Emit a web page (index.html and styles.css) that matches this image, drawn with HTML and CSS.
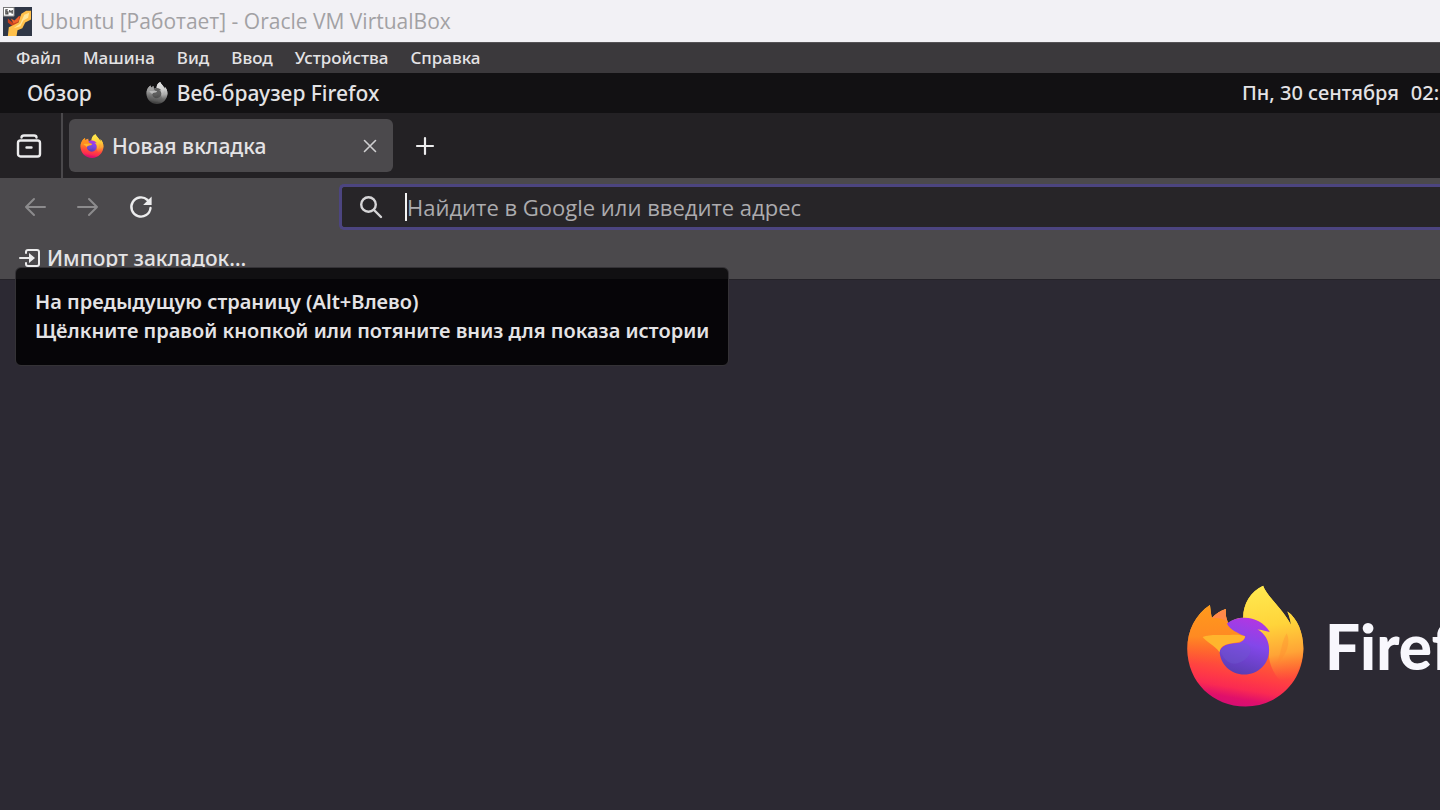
FILE: index.html
```html
<!DOCTYPE html>
<html lang="ru">
<head>
<meta charset="utf-8">
<title>Ubuntu [Работает] - Oracle VM VirtualBox</title>
<link rel="stylesheet" href="styles.css">
</head>
<body>
<svg class="defs" aria-hidden="true">
  <defs>
    <linearGradient id="body" x1="0.65" y1="0.1" x2="0.5" y2="1">
      <stop offset="0" stop-color="#ffdc3e"/><stop offset=".28" stop-color="#ffad2d"/><stop offset=".5" stop-color="#ff6a2b"/><stop offset=".75" stop-color="#ff3b45"/><stop offset=".85" stop-color="#fa2a52"/><stop offset=".94" stop-color="#e0106a"/><stop offset="1" stop-color="#d80d72"/>
    </linearGradient>
    <linearGradient id="flame" x1="0.4" y1="0" x2="0.5" y2="1">
      <stop offset="0" stop-color="#ffe94f"/><stop offset=".4" stop-color="#ffd43a"/><stop offset=".7" stop-color="#ffa436"/><stop offset=".97" stop-color="#ff7436" stop-opacity="0"/>
    </linearGradient>
    <linearGradient id="globe" x1="0.65" y1="0" x2="0.4" y2="1">
      <stop offset="0" stop-color="#b336e2"/><stop offset=".45" stop-color="#8347ea"/><stop offset="1" stop-color="#5a3db2"/>
    </linearGradient>
    <linearGradient id="head" x1="0" y1="0" x2="0" y2="1">
      <stop offset="0" stop-color="#ff9a1c"/><stop offset=".4" stop-color="#ff8a22"/><stop offset=".75" stop-color="#ff5a30" stop-opacity="0"/>
    </linearGradient>
    <symbol id="firefox" viewBox="50 45 352 366">
      <path fill="url(#body)" d="M119 105C121 119 122 133 125 144C137 131 151 122 167 117C165 135 168 148 174 160C187 149 202 143 219 143C219 101 241 65 279 47C290 78 334 112 363 164C361 148 357 136 352 124C382 144 400 188 400 236C400 333 323 410 226 410C128 410 51 336 51 236C51 182 76 133 119 105Z"/>
      <path fill="url(#flame)" d="M219 143C219 101 241 65 279 47C290 78 334 112 363 164C361 148 357 136 352 124C382 144 400 188 400 236C400 276 380 320 350 346C330 340 290 290 297 240C297 208 280 190 262 178C278 178 289 182 299 185C280 158 252 143 219 143Z"/>
      <path fill="url(#head)" d="M119 105C121 119 122 133 125 144C137 131 151 122 167 117C165 138 170 151 177 163C188 181 208 188 224 198C222 218 195 216 168 222C152 229 147 240 150 253C145 279 160 304 186 312C125 370 51 336 51 236C51 182 76 133 119 105Z"/>
      <path fill="#ff884a" d="M125 144C137 131 151 122 167 117C165 130 167 143 172 154C157 145 141 142 125 144Z"/>
      <path fill="url(#globe)" d="M170 160C187 148 204 143 223 143C255 143 283 159 299 186C286 182 274 179 262 178C284 190 297 210 297 240C297 282 264 314 222 314C182 314 149 282 148 243C158 219 190 220 208 218C220 213 223 208 225 199C203 188 181 181 170 160Z"/>
      <path fill="#6f5bd0" opacity=".4" d="M150 243C167 219 202 226 224 219C254 230 242 263 211 277C188 288 163 277 150 243Z"/>
      <path fill="#ffb52d" d="M97 201C119 191 154 196 179 195C199 193 214 195 225 199C221 219 197 217 170 223C155 228 149 236 148 247C134 226 108 216 97 201Z"/>
      <path fill="#ff8a32" opacity=".35" d="M350 190C363 217 351 256 318 285C336 248 331 222 350 190Z"/>
    </symbol>
  </defs>
</svg>

<header class="titlebar">
  <svg class="vm-icon" viewBox="0 0 30 30" aria-hidden="true">
    <path fill="#303746" d="M0 0h30v30H0z"/>
    <path fill="#c8401f" d="M5 12l5 4 7-7 2 1-4 7-5 3-5-4z"/>
    <path fill="#f0642c" d="M8 12l4 2 5-5-1 6-5 2z"/>
    <path fill="#ffc04b" d="M29 4v9l-6 3-3 6-5 2-1 6H5l1-9 6-3 4-2 3-9 5-3z"/>
    <path fill="#ffe69a" d="M22 8l5-2-1 5-5 3-3 6-7 2 7-5z"/>
    <path fill="#fff" stroke="#777" d="M.5.5h11v9H.5z"/>
    <path fill="none" stroke="#444" stroke-width="1.3" d="M5 3H3v4h2V5H3M7 3v2h3M9.500 3v4"/>
  </svg>
  <h1 class="window-title">Ubuntu [Работает] - Oracle VM VirtualBox</h1>
</header>

<nav class="menubar" aria-label="Меню">
  <button class="menu">Файл</button>
  <button class="menu">Машина</button>
  <button class="menu">Вид</button>
  <button class="menu">Ввод</button>
  <button class="menu">Устройства</button>
  <button class="menu">Справка</button>
</nav>

<div class="panel">
  <button class="overview">Обзор</button>
  <button class="app-menu"><svg class="app-icon" aria-hidden="true"><use href="#firefox"/></svg>Веб-браузер Firefox</button>
  <time class="clock"><span>Пн, 30 сентября</span><span>02:</span></time>
</div>

<div class="tabstrip">
  <button class="recent" aria-label="Обзор вкладок">
    <svg class="icon" viewBox="0 0 26 26" fill="none" stroke="#ececed" stroke-width="2.400" stroke-linecap="round" aria-hidden="true"><rect x="2" y="7.500" width="22" height="16" rx="2.500"/><path d="M5.500 4.500Q5.500 2.500 8 2.500H18Q20.500 2.500 20.500 4.500M10.500 14.500h5"/></svg>
  </button>
  <div class="tab">
    <svg class="tab-icon" aria-hidden="true"><use href="#firefox"/></svg>
    <span class="tab-title">Новая вкладка</span>
    <button class="close" aria-label="Закрыть вкладку"><svg viewBox="0 0 14 14" width="14" height="14" fill="none" stroke="#d0cfd1" stroke-width="1.600" stroke-linecap="round"><path d="M1.500 1.500l11 11M12.500 1.500l-11 11"/></svg></button>
  </div>
  <button class="new-tab" aria-label="Новая вкладка"><svg viewBox="0 0 20 20" width="20" height="20" fill="none" stroke="#ececed" stroke-width="2.200" stroke-linecap="round"><path d="M10 2v16M2 10h16"/></svg></button>
</div>

<div class="toolbar">
  <button class="tool" aria-label="Назад"><svg class="icon" viewBox="0 0 26 26" fill="none" stroke="#8c8b8d" stroke-width="2" stroke-linecap="round" stroke-linejoin="round"><path d="M23 13H4M12 5l-8 8 8 8"/></svg></button>
  <button class="tool" aria-label="Вперёд"><svg class="icon" viewBox="0 0 26 26" fill="none" stroke="#8c8b8d" stroke-width="2" stroke-linecap="round" stroke-linejoin="round"><path d="M3 13h19M14 5l8 8-8 8"/></svg></button>
  <button class="tool" aria-label="Обновить"><svg class="icon" viewBox="0 0 26 26" fill="none" stroke="#ececed" stroke-width="2.400" stroke-linecap="round"><path d="M22.500 14A9.600 9.600 0 1 1 19.500 6"/><path fill="#ececed" stroke="none" d="M23.600 2.500V11h-8.500z"/></svg></button>
  <label class="address">
    <svg class="icon" viewBox="0 0 26 26" fill="none" stroke="#d6d5d7" stroke-width="2.400" stroke-linecap="round" aria-hidden="true"><circle cx="10.500" cy="10.500" r="7.300"/><path d="M16 16l7 7"/></svg>
    <input class="query" type="text" aria-label="Адрес" placeholder="Найдите в Google или введите адрес">
  </label>
</div>

<div class="bookmarks">
  <a class="import" href="#"><svg class="import-icon" viewBox="0 0 22 20" fill="none" stroke="#ececed" stroke-width="2" stroke-linecap="round" aria-hidden="true"><path d="M7 5V4Q7 2 9 2h9q2 0 2 2v12q0 2-2 2H9q-2 0-2-2v-1M1 10h11"/><path fill="#ececed" stroke="none" d="M10 5l6 5-6 5z"/></svg>Импорт закладок…</a>
  <div class="tooltip" role="tooltip">На предыдущую страницу (Alt+Влево)<br>Щёлкните правой кнопкой или потяните вниз для показа истории</div>
</div>

<main class="page">
  <div class="brand">
    <svg class="logo" aria-hidden="true"><use href="#firefox"/></svg>
    <span class="wordmark">Firef</span>
  </div>
</main>
</body>
</html>
```
FILE: styles.css
```css
* { box-sizing: border-box; }

body {
  margin: 0;
  min-height: 100vh;
  display: flex;
  flex-direction: column;
  overflow: hidden;
  background: #2c2933;
  color: #e4e3e5;
  font: 500 21px/28px "Noto Sans", "Open Sans", sans-serif;
  white-space: nowrap;
}

button {
  padding: 0;
  border: 0;
  background: none;
  color: inherit;
  font: inherit;
}

svg { display: block; flex: none; }
.defs { position: absolute; width: 0; height: 0; }
.icon { width: 26px; height: 26px; }

.titlebar {
  display: flex;
  align-items: center;
  gap: 8px;
  height: 42px;
  padding: 0 3px;
  background: #f2f1f5;
}
.vm-icon { width: 29px; height: 29px; }
.window-title {
  margin: 0;
  color: #a2a1a4;
  font: 400 21px/28px "Open Sans", sans-serif;
}

.menubar {
  display: flex;
  align-items: center;
  gap: 22px;
  height: 31px;
  padding: 0 16px;
  background: #3b393c;
  border-top: 1px solid #555356;
  font-size: 17px;
}

.panel {
  display: flex;
  align-items: center;
  height: 40px;
  padding-left: 27px;
  background: #121113;
}
.app-menu {
  display: flex;
  align-items: center;
  gap: 9px;
  margin-left: 54px;
}
.app-icon { width: 22px; height: 22px; filter: grayscale(1); }
.clock {
  display: flex;
  gap: 12px;
  width: 198px;
  margin-left: auto;
  font-size: 20px;
}

.tabstrip {
  display: flex;
  align-items: center;
  height: 65px;
  background: #232124;
}
.recent {
  display: flex;
  align-items: center;
  align-self: stretch;
  width: 63px;
  padding-left: 16px;
  border-right: 2px solid #4a484b;
}
.tab {
  display: flex;
  align-items: center;
  width: 324px;
  height: 53px;
  margin-left: 6px;
  padding: 0 16px 0 11px;
  border-radius: 6px;
  background: #4b494c;
}
.tab-icon { width: 24px; height: 24px; margin-right: 8px; }
.close { margin-left: auto; }
.new-tab { margin-left: 22px; }

.toolbar {
  display: flex;
  align-items: center;
  gap: 27px;
  height: 58px;
  padding-left: 22px;
  background: #4b494c;
}
.address {
  display: flex;
  flex: 1;
  align-items: center;
  gap: 21px;
  height: 46px;
  margin-left: 158px;
  padding-left: 16px;
  border: 3px solid #4c4580;
  border-right: 0;
  border-radius: 5px 0 0 5px;
  background: #272528;
}
.query {
  flex: 1;
  height: 28px;
  padding: 0;
  border: 0;
  border-left: 2px solid #f4f4f4;
  outline: 0;
  background: none;
  color: #ececed;
  font: 400 22px/28px "Open Sans", sans-serif;
}
.query::placeholder { color: #acabae; opacity: 1; }

.bookmarks {
  position: relative;
  height: 44px;
  padding: 8px 19px;
  border-bottom: 1px solid #252329;
  background: #4b494c;
}
.import {
  display: inline-flex;
  align-items: center;
  gap: 6px;
  color: inherit;
  text-decoration: none;
}
.import-icon { width: 22px; height: 20px; }

.tooltip {
  position: absolute;
  top: 31px;
  left: 15px;
  padding: 19px 19px 20px;
  border: 1px solid #343236;
  border-radius: 6px;
  background: linear-gradient(#111012 11px, #060508 11px);
  font-weight: 600;
  font-size: 20px;
  line-height: 29px;
}

.page {
  display: flex;
  flex: 1;
  justify-content: flex-end;
}
.brand {
  display: flex;
  align-items: center;
  gap: 21px;
  width: 253px;
  height: 122px;
  margin-top: 305px;
}
.logo { width: 117px; height: 122px; }
.wordmark {
  color: #f8f7fd;
  font: 900 62px/64px "Lato", sans-serif;
}
```
